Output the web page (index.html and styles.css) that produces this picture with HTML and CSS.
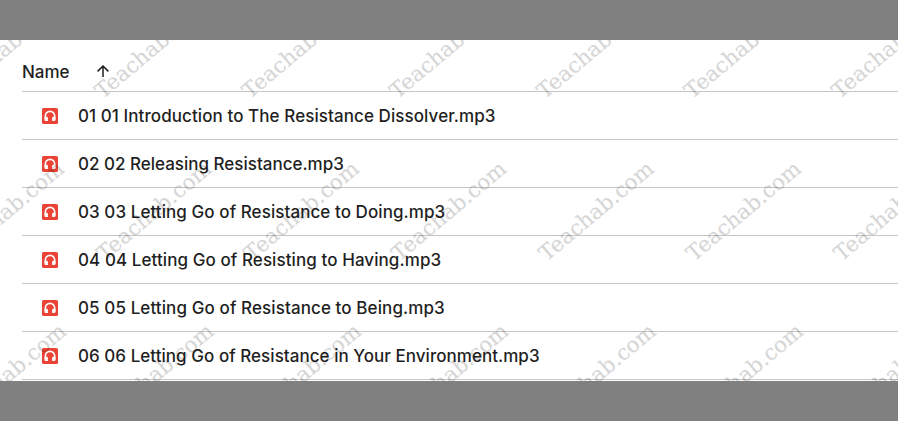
FILE: index.html
```
<!DOCTYPE html>
<html lang="en">
<head>
  <meta charset="UTF-8" />
  <meta name="viewport" content="width=device-width, initial-scale=1.0"/>
  <title>Files</title>
  <link rel="stylesheet" href="styles.css">
</head>
<body>

  <!-- Shared icon -->
  <svg class="sprite" width="0" height="0">
    <symbol id="audio" viewBox="0 0 16 16">
      <rect width="16" height="16" rx="1.6" fill="#ea4335"/>
      <path d="M3.4 11.5V7.9a4.6 4.6 0 0 1 9.2 0v3.6" fill="none" stroke="#fff" stroke-width="1.7"/>
      <path d="M2.55 8.9H5.9v4.2H3.7a1.15 1.15 0 0 1-1.15-1.15zM10.1 8.9h3.35v3.05a1.15 1.15 0 0 1-1.15 1.15h-2.2z" fill="#fff"/>
    </symbol>
  </svg>

  <main class="panel">
    <header class="list-header">
      <span class="label">Name</span>
      <svg class="sort" viewBox="0 0 12 12"><path d="M6 12V1.4M.6 6.4L6 1l5.4 5.4" fill="none" stroke="#1f1f1f" stroke-width="1.5"/></svg>
    </header>

    <ul class="file-list">
      <li><svg class="icon"><use href="#audio"/></svg><span class="name name-1">01 01 Introduction to The Resistance Dissolver.mp3</span></li>
      <li><svg class="icon"><use href="#audio"/></svg><span class="name name-2">02 02 Releasing Resistance.mp3</span></li>
      <li><svg class="icon"><use href="#audio"/></svg><span class="name name-3">03 03 Letting Go of Resistance to Doing.mp3</span></li>
      <li><svg class="icon"><use href="#audio"/></svg><span class="name name-4">04 04 Letting Go of Resisting to Having.mp3</span></li>
      <li><svg class="icon"><use href="#audio"/></svg><span class="name name-5">05 05 Letting Go of Resistance to Being.mp3</span></li>
      <li><svg class="icon"><use href="#audio"/></svg><span class="name name-6">06 06 Letting Go of Resistance in Your Environment.mp3</span></li>
    </ul>

    <!-- Watermark -->
    <svg class="watermark" viewBox="0 40 898 341">
      <text transform="translate(-45 99.5) rotate(-40)">Teachab.com</text>
      <text transform="translate(102.4 99.5) rotate(-40)">Teachab.com</text>
      <text transform="translate(249.8 99.5) rotate(-40)">Teachab.com</text>
      <text transform="translate(397.2 99.5) rotate(-40)">Teachab.com</text>
      <text transform="translate(544.6 99.5) rotate(-40)">Teachab.com</text>
      <text transform="translate(692 99.5) rotate(-40)">Teachab.com</text>
      <text transform="translate(839.4 99.5) rotate(-40)">Teachab.com</text>

      <text transform="translate(-43 262) rotate(-40)">Teachab.com</text>
      <text transform="translate(104.4 262) rotate(-40)">Teachab.com</text>
      <text transform="translate(251.8 262) rotate(-40)">Teachab.com</text>
      <text transform="translate(399.2 262) rotate(-40)">Teachab.com</text>
      <text transform="translate(546.6 262) rotate(-40)">Teachab.com</text>
      <text transform="translate(694 262) rotate(-40)">Teachab.com</text>
      <text transform="translate(841.4 262) rotate(-40)">Teachab.com</text>

      <text transform="translate(-41 424.5) rotate(-40)">Teachab.com</text>
      <text transform="translate(106.4 424.5) rotate(-40)">Teachab.com</text>
      <text transform="translate(253.8 424.5) rotate(-40)">Teachab.com</text>
      <text transform="translate(401.2 424.5) rotate(-40)">Teachab.com</text>
      <text transform="translate(548.6 424.5) rotate(-40)">Teachab.com</text>
      <text transform="translate(696 424.5) rotate(-40)">Teachab.com</text>
      <text transform="translate(843.4 424.5) rotate(-40)">Teachab.com</text>
    </svg>
  </main>

</body>
</html>
```
FILE: styles.css
```
body {
  margin: 0;
  padding: 40px 0;
  background: #808080;
  color: #1f1f1f;
  font-family: Inter, sans-serif;
  font-size: 17px;
  font-weight: 450;
  overflow: hidden;
}

.sprite {
  position: absolute;
}

.panel {
  position: relative;
  height: 341px;
  box-sizing: border-box;
  padding-left: 22px;
  background: #fff;
  overflow: hidden;
}

.list-header {
  display: flex;
  align-items: center;
  gap: 27px;
  height: 52px;
  padding-top: 12px;
  box-sizing: border-box;
  border-bottom: 1px solid #c7c7c7;
}

.sort {
  width: 12px;
  height: 12px;
  margin-bottom: 1px;
}

.file-list {
  list-style: none;
  margin: 0;
  padding: 0;
}

.file-list li {
  display: flex;
  align-items: center;
  gap: 20px;
  height: 48px;
  padding-left: 20px;
  box-sizing: border-box;
  border-bottom: 1px solid #c7c7c7;
}

.icon {
  width: 16px;
  height: 16px;
}

.name {
  white-space: nowrap;
}

.name-1 { letter-spacing: 0.08px; }
.name-3 { letter-spacing: 0.07px; }
.name-4 { letter-spacing: 0.08px; }
.name-5 { letter-spacing: 0.1px; }
.name-6 { letter-spacing: 0.04px; }

.watermark {
  position: absolute;
  left: 0;
  top: 0;
  width: 898px;
  height: 341px;
  opacity: 0.16;
}

.watermark text {
  font-family: "DejaVu Serif", serif;
  font-size: 21.33px;
  font-weight: 400;
  fill: #000;
  stroke: #000;
  stroke-width: 0.2px;
}
```
